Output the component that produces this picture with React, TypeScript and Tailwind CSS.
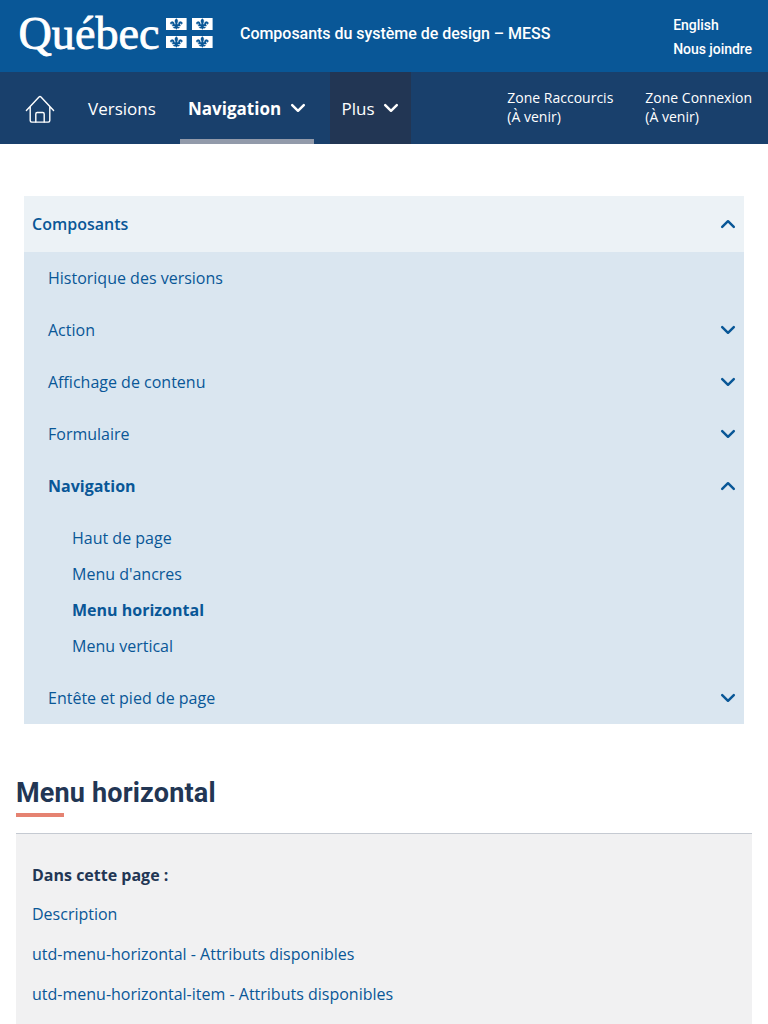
import React from "react";

type Item = { label: string; state?: "open" | "closed"; children?: string[] };

const items: Item[] = [
  { label: "Historique des versions" },
  { label: "Action", state: "closed" },
  { label: "Affichage de contenu", state: "closed" },
  { label: "Formulaire", state: "closed" },
  {
    label: "Navigation",
    state: "open",
    children: ["Haut de page", "Menu d'ancres", "Menu horizontal", "Menu vertical"],
  },
  { label: "Entête et pied de page", state: "closed" },
];

const anchors = [
  "Description",
  "utd-menu-horizontal - Attributs disponibles",
  "utd-menu-horizontal-item - Attributs disponibles",
];

function Chevron({ up = false }: { up?: boolean }) {
  return (
    <svg width="16" height="10" viewBox="0 0 16 10" fill="none" className="shrink-0">
      <path
        d={up ? "M2.2 7.8 8 2.2l5.8 5.6" : "M2.2 2.2 8 7.8l5.8-5.6"}
        stroke="currentColor"
        strokeWidth="2.5"
        strokeLinecap="round"
        strokeLinejoin="round"
      />
    </svg>
  );
}

function Logo() {
  const fleur =
    "M10.3 1.5C9 3 8.7 4 9.5 6l.3 1.2H8.6C8.7 5.4 7.6 4.1 6.3 4.6 4.8 5 4.8 6.8 6 7.3c-.1-.9.5-1.3 1-.8.4.4.3 1-.1 1.6v.9h2.4c-.2 1-1 1.4-1.8 1.1.3 1 1.2 1.2 1.9.8l.9 1.4.9-1.4c.7.4 1.6.2 1.9-.8-.8.3-1.6-.1-1.8-1.1h2.4v-.9c-.4-.6-.5-1.2-.1-1.6.5-.5 1.1-.1 1 .8 1.2-.5 1.2-2.3-.3-2.7-1.3-.5-2.4.8-2.3 2.6h-1.2l.3-1.2c.8-2 .5-3-.8-4.5Z";
  return (
    <svg width="224" height="72" viewBox="0 0 224 72" className="shrink-0">
      <text
        x="18.5"
        y="48.5"
        fontSize="45.5"
        textLength="141"
        lengthAdjust="spacingAndGlyphs"
        fill="#fff"
        stroke="#fff"
        strokeWidth="0.8"
        className="font-['Liberation_Serif',serif]"
      >
        Québec
      </text>
      {[
        [166, 18],
        [192, 18],
        [166, 36],
        [192, 36],
      ].map(([x, y]) => (
        <g key={`${x}-${y}`} transform={`translate(${x} ${y})`}>
          <rect width="20.6" height="12" fill="#fff" />
          <path
            d={fleur}
            transform="translate(-1.8 -.9)scale(1.18 1)"
            fill="#095797"
            stroke="#095797"
            strokeWidth="0.3"
          />
        </g>
      ))}
    </svg>
  );
}

function HomeIcon() {
  return (
    <svg
      width="30"
      height="30"
      viewBox="0 0 30 30"
      fill="none"
      stroke="#fff"
      strokeWidth="1.4"
      strokeLinecap="round"
      strokeLinejoin="round"
    >
      <path d="M1.4 16.4 14 2.9q1-1 2 0l12.6 13.5M5.2 12.7v13.9q0 1.5 1.5 1.5h16.6q1.5 0 1.5-1.5V12.7" />
      <path d="M10.8 28.1v-8.2q0-1.4 1.4-1.4h5.6q1.4 0 1.4 1.4v8.2" />
    </svg>
  );
}

export default function App() {
  return (
    <div className="h-[1024px] overflow-hidden bg-white font-['Open_Sans',sans-serif] text-base text-[#095797]">
      <header className="flex h-[72px] items-start bg-[#095797] pr-4 font-[Roboto,sans-serif] text-white">
        <Logo />
        <div className="ml-4 flex-1 pt-[22px] leading-6 font-medium tracking-[-0.03px] whitespace-nowrap">
          Composants du système de design – MESS
        </div>
        <div className="pt-[13px] text-sm leading-6 font-medium tracking-[-0.05px]">
          <div>English</div>
          <div>Nous joindre</div>
        </div>
      </header>

      <nav className="flex h-[72px] bg-[#19406c] pr-4 text-white">
        <div className="flex w-[80px] items-center pt-[2px] pl-[25px]">
          <HomeIcon />
        </div>
        <div className="flex w-[100px] items-center pt-px pl-2 text-[17px]">
          <a>Versions</a>
        </div>
        <div className="mr-4 flex w-[134px] items-center border-b-[5px] border-[#929aaa] pt-[6px] pl-2 text-[17px] font-bold">
          <span className="w-[102px]">Navigation</span>
          <span className="pb-[2px]">
            <Chevron />
          </span>
        </div>
        <div className="flex w-[81px] items-center bg-[#223654] pt-px pl-[11.5px] text-[17px]">
          <span className="w-[41.5px]">Plus</span>
          <span className="pb-[2px]">
            <Chevron />
          </span>
        </div>
        <div className="ml-auto flex items-start gap-8 pt-4 text-sm leading-[19px]">
          <div>Zone Raccourcis<br />(À venir)</div>
          <div>Zone Connexion<br />(À venir)</div>
        </div>
      </nav>

      <section className="mx-6 mt-[52px]">
        <div className="flex h-14 items-center justify-between bg-[#ecf2f6] px-2 font-semibold">
          Composants
          <Chevron up />
        </div>
        <ul className="bg-[#dae6f0]">
          {items.map((item) => (
            <li key={item.label}>
              <div
                className={`flex h-[52px] items-center justify-between pr-2 pl-6 ${
                  item.state === "open" ? "font-bold" : ""
                }`}
              >
                {item.label}
                {item.state && <Chevron up={item.state === "open"} />}
              </div>
              {item.children && (
                <ul className="py-2 pl-12">
                  {item.children.map((child) => (
                    <li
                      key={child}
                      className={`flex h-9 items-center ${child === "Menu horizontal" ? "font-bold" : ""}`}
                    >
                      {child}
                    </li>
                  ))}
                </ul>
              )}
            </li>
          ))}
        </ul>
      </section>

      <main className="mx-4 mt-[53px] text-[#223654]">
        <h1 className="h-9 font-[Roboto,sans-serif] text-[27px] leading-8 font-bold tracking-[0.17px]">
          Menu horizontal
        </h1>
        <div className="h-1 w-12 bg-[#e58271]" />
        <div className="mt-4 h-[200px] border-t border-[#c5cad2] bg-[#f1f1f2] px-4 pt-[29px]">
          <div className="leading-6 font-bold">Dans cette page :</div>
          <ul className="mt-[15px] flex flex-col gap-4 leading-6 text-[#095797]">
            {anchors.map((a) => (
              <li key={a}>{a}</li>
            ))}
          </ul>
        </div>
      </main>
    </div>
  );
}
